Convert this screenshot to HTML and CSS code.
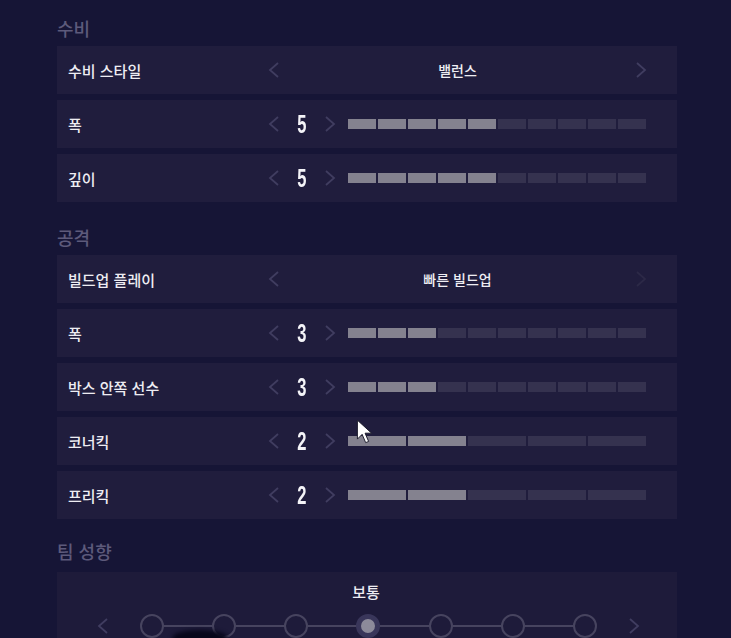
FILE: index.html
```html
<!DOCTYPE html>
<html lang="ko">
<head>
    <meta charset="UTF-8">
    <title>전술 설정</title>
    <link rel="stylesheet" href="styles.css">
</head>
<body>
    <div class="tactics">
        <h2 class="section-title">수비</h2>
        <div class="rows">
            <div class="row">
                <span class="label">수비 스타일</span>
                <div class="choice">
                    <svg class="chev" viewBox="0 0 12 16"><polyline points="10,1 2,8 10,15"/></svg>
                    <span class="choice-value">밸런스</span>
                    <svg class="chev" viewBox="0 0 12 16"><polyline points="2,1 10,8 2,15"/></svg>
                </div>
            </div>
            <div class="row">
                <span class="label">폭</span>
                <div class="step">
                    <svg class="chev" viewBox="0 0 12 16"><polyline points="10,1 2,8 10,15"/></svg>
                    <span class="num">5</span>
                    <svg class="chev" viewBox="0 0 12 16"><polyline points="2,1 10,8 2,15"/></svg>
                </div>
                <div class="bars">
                    <i class="on"></i><i class="on"></i><i class="on"></i><i class="on"></i><i class="on"></i>
                    <i></i><i></i><i></i><i></i><i></i>
                </div>
            </div>
            <div class="row">
                <span class="label">깊이</span>
                <div class="step">
                    <svg class="chev" viewBox="0 0 12 16"><polyline points="10,1 2,8 10,15"/></svg>
                    <span class="num">5</span>
                    <svg class="chev" viewBox="0 0 12 16"><polyline points="2,1 10,8 2,15"/></svg>
                </div>
                <div class="bars">
                    <i class="on"></i><i class="on"></i><i class="on"></i><i class="on"></i><i class="on"></i>
                    <i></i><i></i><i></i><i></i><i></i>
                </div>
            </div>
        </div>

        <h2 class="section-title">공격</h2>
        <div class="rows">
            <div class="row">
                <span class="label">빌드업 플레이</span>
                <div class="choice">
                    <svg class="chev" viewBox="0 0 12 16"><polyline points="10,1 2,8 10,15"/></svg>
                    <span class="choice-value">빠른 빌드업</span>
                    <svg class="chev off" viewBox="0 0 12 16"><polyline points="2,1 10,8 2,15"/></svg>
                </div>
            </div>
            <div class="row">
                <span class="label">폭</span>
                <div class="step">
                    <svg class="chev" viewBox="0 0 12 16"><polyline points="10,1 2,8 10,15"/></svg>
                    <span class="num">3</span>
                    <svg class="chev" viewBox="0 0 12 16"><polyline points="2,1 10,8 2,15"/></svg>
                </div>
                <div class="bars">
                    <i class="on"></i><i class="on"></i><i class="on"></i>
                    <i></i><i></i><i></i><i></i><i></i><i></i><i></i>
                </div>
            </div>
            <div class="row">
                <span class="label">박스 안쪽 선수</span>
                <div class="step">
                    <svg class="chev" viewBox="0 0 12 16"><polyline points="10,1 2,8 10,15"/></svg>
                    <span class="num">3</span>
                    <svg class="chev" viewBox="0 0 12 16"><polyline points="2,1 10,8 2,15"/></svg>
                </div>
                <div class="bars">
                    <i class="on"></i><i class="on"></i><i class="on"></i>
                    <i></i><i></i><i></i><i></i><i></i><i></i><i></i>
                </div>
            </div>
            <div class="row">
                <span class="label">코너킥</span>
                <div class="step">
                    <svg class="chev" viewBox="0 0 12 16"><polyline points="10,1 2,8 10,15"/></svg>
                    <span class="num">2</span>
                    <svg class="chev" viewBox="0 0 12 16"><polyline points="2,1 10,8 2,15"/></svg>
                </div>
                <div class="bars">
                    <i class="on"></i><i class="on"></i><i></i><i></i><i></i>
                </div>
            </div>
            <div class="row">
                <span class="label">프리킥</span>
                <div class="step">
                    <svg class="chev" viewBox="0 0 12 16"><polyline points="10,1 2,8 10,15"/></svg>
                    <span class="num">2</span>
                    <svg class="chev" viewBox="0 0 12 16"><polyline points="2,1 10,8 2,15"/></svg>
                </div>
                <div class="bars">
                    <i class="on"></i><i class="on"></i><i></i><i></i><i></i>
                </div>
            </div>
        </div>

        <h2 class="section-title team">팀 성향</h2>
        <div class="team-panel">
            <div class="team-value">보통</div>
            <div class="team-track">
                <svg class="chev" viewBox="0 0 12 16"><polyline points="10,1 2,8 10,15"/></svg>
                <div class="dots">
                    <span class="dot"></span>
                    <span class="dot"></span>
                    <span class="dot"></span>
                    <span class="dot active"></span>
                    <span class="dot"></span>
                    <span class="dot"></span>
                    <span class="dot"></span>
                </div>
                <svg class="chev" viewBox="0 0 12 16"><polyline points="2,1 10,8 2,15"/></svg>
            </div>
        </div>
    </div>

    <span class="shadow-blob"></span>
    <svg class="cursor" viewBox="0 0 14 22" width="17" height="26">
        <path d="M1,1 L1,17 L5,13 L8,20 L10.5,19 L7.5,12 L13,12 Z" fill="#fff" stroke="#1a1a2a" stroke-width="0.8"/>
    </svg>
</body>
</html>
```

FILE: styles.css
```css
body {
    margin: 0;
    background-color: #161536;
    font-family: "Noto Sans CJK KR", "Noto Sans", sans-serif;
    color: #eeedf3;
    overflow: hidden;
    height: 638px;
}
.tactics {
    width: 620px;
    padding: 13px 0 0 57px;
}
.section-title {
    margin: 0 0 3px;
    height: 30px;
    line-height: 30px;
    font-size: 18px;
    font-weight: 500;
    color: #5d5a7b;
}
.section-title.team { margin-top: -3px; margin-bottom: 6px; }
.rows {
    display: flex;
    flex-direction: column;
    gap: 6px;
    margin-bottom: 20px;
}
.row {
    height: 48px;
    background-color: #201d3d;
    display: flex;
    align-items: center;
}
.label {
    width: 200px;
    padding-left: 11px;
    font-size: 15px;
    font-weight: 500;
}
.chev {
    width: 12px;
    height: 16px;
    fill: none;
    stroke: #403d60;
    stroke-width: 1.8;
}
.chev.off { stroke: #2c2947; }
.choice {
    width: 379px;
    display: flex;
    align-items: center;
    justify-content: space-between;
}
.choice-value {
    font-size: 14px;
    font-weight: 500;
}
.step {
    width: 68px;
    display: grid;
    grid-template-columns: 12px 1fr 12px;
    align-items: center;
}
.num {
    justify-self: center;
    display: inline-block;
    transform: scaleX(0.66);
    font-family: "Liberation Sans", sans-serif;
    font-weight: bold;
    font-size: 25px;
    line-height: 24px;
    color: #f4f4f8;
}
.bars {
    margin-left: 12px;
    width: 298px;
    display: flex;
    gap: 2px;
}
.bars i {
    flex: 1;
    height: 10px;
    background-color: #35324f;
}
.bars i.on { background-color: #84828f; }
.team-panel {
    background-color: #1e1b3a;
    height: 80px;
    padding-top: 10px;
}
.team-value {
    text-align: center;
    font-size: 15px;
    line-height: 20px;
    font-weight: 500;
    padding-right: 2px;
}
.team-track {
    display: flex;
    align-items: center;
    gap: 31px;
    padding-left: 40px;
    margin-top: 12px;
}
.dots {
    width: 457px;
    display: flex;
    justify-content: space-between;
    position: relative;
}
.dots::before {
    content: "";
    position: absolute;
    left: 12px;
    right: 12px;
    top: 11px;
    height: 2px;
    background-color: #47445f;
}
.dot {
    position: relative;
    width: 20px;
    height: 20px;
    border: 2px solid #47445f;
    border-radius: 50%;
    background-color: #1e1b3a;
}
.dot.active {
    border: 5px solid #39365a;
    width: 14px;
    height: 14px;
    background-color: #8c8a9a;
}
.shadow-blob {
    position: absolute;
    left: 172px;
    top: 630px;
    width: 56px;
    height: 16px;
    border-radius: 50%;
    background-color: #07061a;
    filter: blur(2px);
}
.cursor {
    position: absolute;
    left: 356px;
    top: 419px;
}
```
